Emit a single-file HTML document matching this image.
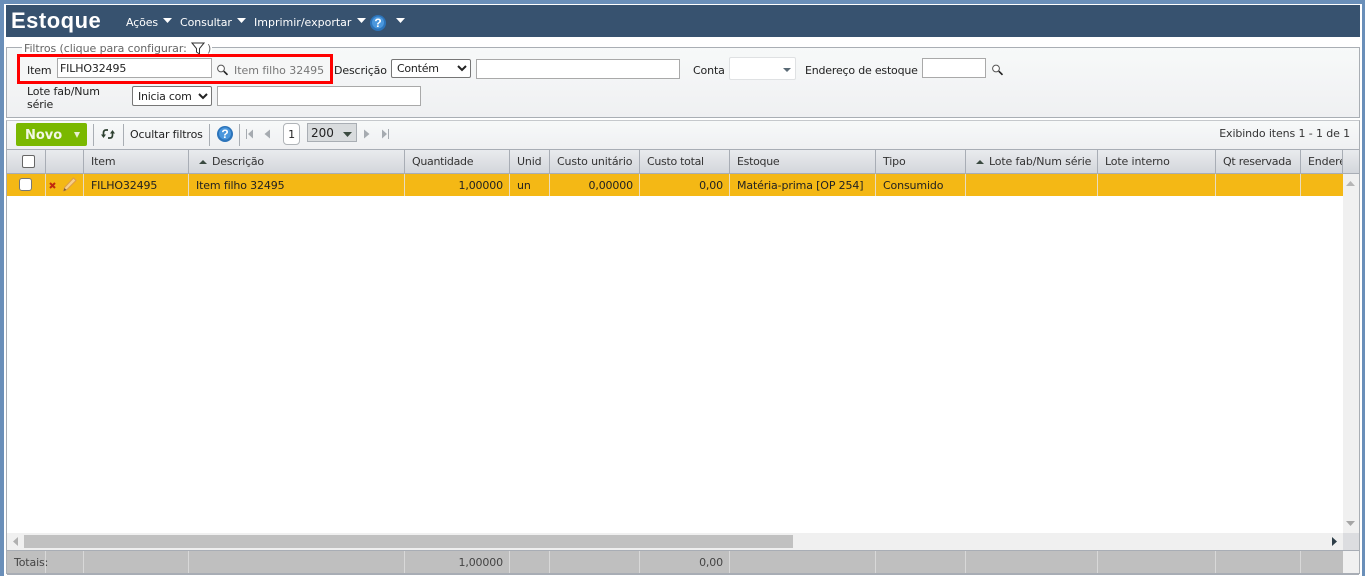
<!DOCTYPE html>
<html lang="pt-BR">
<head>
<meta charset="utf-8">
<title>Estoque</title>
<style>
html,body{margin:0;padding:0;width:1365px;height:576px;overflow:hidden;background:#fff;font-family:"DejaVu Sans","Liberation Sans",sans-serif;font-size:11px;color:#222;letter-spacing:-.14px}
div,span,input,select{box-sizing:border-box;position:absolute}
.t{white-space:nowrap;line-height:14px}
.gr{background:linear-gradient(#f7f9f9,#eff0f2)}
.hc{top:150px;height:24px;line-height:23px;color:#333;white-space:nowrap;overflow:hidden;padding-left:7px;border-right:1px solid #a8adb5}
.rc{top:174px;height:22px;line-height:23px;color:#222;white-space:nowrap;padding:0 6px 0 7px;border-right:1px solid #e8dcc0}
.tc{top:551px;height:22px;line-height:23px;color:#444;white-space:nowrap;padding:0 6px 0 7px;border-right:1px solid #d8d8d8}
.box{background:#fff;border:1px solid #a9a9a9}
.cb{width:14px;height:14px;background:#fff;border:1px solid #767676;border-radius:2px}
select{font-family:inherit;font-size:11px;letter-spacing:-.25px;color:#222;background:#fff;border:1px solid #767676;border-radius:2px;padding:0 0 0 1px;margin:0}
.sep{width:1px;background:#a9aeb4;top:124px;height:22px}
svg{position:absolute;display:block}
</style>
</head>
<body>
<!-- outer frame -->
<div style="left:0;top:0;width:1365px;height:4px;background:#6a8fb9"></div>
<div style="left:0;top:0;width:4px;height:576px;background:#6a8fb9"></div>
<div style="left:1362px;top:0;width:3px;height:576px;background:#6a8fb9"></div>

<!-- header bar -->
<div style="left:6px;top:5px;width:1354px;height:32px;background:#37526f"></div>
<div class="t" style="left:11px;top:8px;font-family:'Liberation Sans',sans-serif;font-size:22px;line-height:25px;font-weight:bold;color:#fff;letter-spacing:.5px">Estoque</div>
<div class="t" style="left:126px;top:16px;color:#fff">Ações</div>
<svg style="left:163px;top:18px" width="9" height="5"><path d="M0 0H9L4.5 5Z" fill="#fff"/></svg>
<div class="t" style="left:180px;top:16px;color:#fff;letter-spacing:-.1px">Consultar</div>
<svg style="left:237px;top:18px" width="9" height="5"><path d="M0 0H9L4.5 5Z" fill="#fff"/></svg>
<div class="t" style="left:254px;top:16px;color:#fff;letter-spacing:0">Imprimir/exportar</div>
<svg style="left:357px;top:18px" width="9" height="5"><path d="M0 0H9L4.5 5Z" fill="#fff"/></svg>
<svg style="left:370px;top:15px" width="16" height="16"><circle cx="8" cy="8" r="8" fill="#2c74ba"/><circle cx="8" cy="7.5" r="6" fill="#4a97dd"/><text x="8" y="12" font-family="Liberation Sans" font-size="12" font-weight="bold" fill="#fff" text-anchor="middle">?</text></svg>
<svg style="left:396px;top:18px" width="9" height="5"><path d="M0 0H9L4.5 5Z" fill="#fff"/></svg>

<!-- filter panel -->
<div class="gr" style="left:6px;top:47px;width:1354px;height:71px;border:1px solid #a9aeb4"></div>
<div style="left:22px;top:42px;width:190px;height:12px;background:#fff"></div>
<div class="t" style="left:24px;top:42px;color:#666;letter-spacing:-.08px">Filtros (clique para configurar:</div>
<svg style="left:191px;top:42px" width="14" height="13"><path d="M1 1H13L8.5 6.5V12L5.5 10V6.5Z" fill="#fff" stroke="#333" stroke-width="1"/></svg>
<div class="t" style="left:207px;top:42px;color:#666">)</div>

<div style="left:17px;top:54px;width:316px;height:30px;border:3px solid #f00;background:#f6f7f7"></div>
<div class="t" style="left:27px;top:64px">Item</div>
<div class="box" style="left:57px;top:58px;width:155px;height:20px;padding-left:2px;line-height:19px;color:#222">FILHO32495</div>
<svg style="left:216px;top:64px" width="13" height="12"><circle cx="5" cy="4.5" r="3.4" fill="#fff" stroke="#555" stroke-width="1"/><path d="M7.8 7.2L11.5 10.8" stroke="#222" stroke-width="1.7"/></svg>
<div class="t" style="left:234px;top:64px;color:#777;letter-spacing:-.04px">Item filho 32495</div>
<div class="t" style="left:334px;top:64px">Descrição</div>
<select style="left:391px;top:59px;width:80px;height:19px"><option>Contém</option></select>
<div class="box" style="left:476px;top:59px;width:204px;height:20px"></div>
<div class="t" style="left:693px;top:64px">Conta</div>
<div style="left:729px;top:57px;width:67px;height:23px;background:#fff;border:1px solid #dfe1e3;border-radius:2px"></div>
<svg style="left:783px;top:68px" width="8" height="4"><path d="M0 0H8L4 4Z" fill="#5a6a75"/></svg>
<div class="t" style="left:805px;top:64px;letter-spacing:-.2px">Endereço de estoque</div>
<div class="box" style="left:922px;top:58px;width:64px;height:20px"></div>
<svg style="left:991px;top:64px" width="13" height="12"><circle cx="5" cy="4.5" r="3.4" fill="#fff" stroke="#555" stroke-width="1"/><path d="M7.8 7.2L11.5 10.8" stroke="#222" stroke-width="1.7"/></svg>
<div class="t" style="left:27px;top:85px;line-height:13px">Lote fab/Num<br>série</div>
<select style="left:132px;top:86px;width:80px;height:20px"><option>Inicia com</option></select>
<div class="box" style="left:217px;top:86px;width:204px;height:20px"></div>

<!-- grid frame -->
<div style="left:6px;top:120px;width:1354px;height:454px;border:1px solid #a9aeb4;border-top-color:#c5c8cc;background:#fff"></div>

<!-- toolbar -->
<div class="gr" style="left:7px;top:121px;width:1352px;height:28px"></div>
<div style="left:16px;top:123px;width:71px;height:23px;background:#7ab800;border-radius:2px"></div>
<div class="t" style="left:25px;top:129px;font-size:13px;letter-spacing:0;font-weight:bold;color:#f2f7e4">Novo</div>
<svg style="left:74px;top:132px" width="6" height="6"><path d="M0 0H6L3 6Z" fill="#e8f0d0"/></svg>
<div class="sep" style="left:93px"></div>
<svg style="left:101px;top:128px" width="14" height="12"><path d="M7 2H5C3.300 2 2.500 3 2.500 5V8" fill="none" stroke="#2d4030" stroke-width="1.700"/><path d="M0 6.500H5L2.500 10Z" fill="#2d4030"/><path d="M7 10H9C10.700 10 11.500 9 11.500 7V4" fill="none" stroke="#2d4030" stroke-width="1.700"/><path d="M9 5.500H14L11.500 2Z" fill="#2d4030"/></svg>
<div class="sep" style="left:123px"></div>
<div class="t" style="left:130px;top:128px">Ocultar filtros</div>
<div class="sep" style="left:209px"></div>
<svg style="left:217px;top:126px" width="16" height="16"><circle cx="8" cy="8" r="8" fill="#2c74ba"/><circle cx="8" cy="7.5" r="6" fill="#4a97dd"/><text x="8" y="12" font-family="Liberation Sans" font-size="12" font-weight="bold" fill="#fff" text-anchor="middle">?</text></svg>
<div class="sep" style="left:239px"></div>
<svg style="left:246px;top:129px" width="8" height="10"><path d="M0.5 0V10" stroke="#a6abb0"/><path d="M7 0.5V9.5L2 5Z" fill="#a6abb0"/></svg>
<svg style="left:264px;top:129px" width="6" height="10"><path d="M6 0.5V9.5L0.5 5Z" fill="#a6abb0"/></svg>
<div style="left:283px;top:123px;width:17px;height:22px;background:#fff;border:1px solid #b0b4b8;border-radius:4px;text-align:center;line-height:21px;color:#222">1</div>
<div style="left:307px;top:123px;width:50px;height:19px;background:#d9dcde;border:1px solid #a9aeb4;padding-left:3px;line-height:18px;font-size:12px;letter-spacing:0;color:#222">200</div>
<svg style="left:343px;top:132px" width="9" height="5"><path d="M0 0H9L4.5 5Z" fill="#3a4a40"/></svg>
<svg style="left:364px;top:129px" width="6" height="10"><path d="M0 0.5V9.5L5.5 5Z" fill="#a6abb0"/></svg>
<svg style="left:381px;top:129px" width="8" height="10"><path d="M7.5 0V10" stroke="#a6abb0"/><path d="M1 0.5V9.5L6 5Z" fill="#a6abb0"/></svg>
<div class="t" style="left:1150px;width:200px;text-align:right;top:127px;color:#333;letter-spacing:-.12px">Exibindo itens 1 - 1 de 1</div>

<!-- grid header -->
<div style="left:7px;top:149px;width:1352px;height:25px;background:linear-gradient(#e9ebee,#d3d6db);border-top:1px solid #a8adb5;border-bottom:1px solid #a8adb5"></div>
<div class="hc" style="left:7px;width:39px"></div>
<div class="cb" style="left:22px;top:155px;border-color:#666;width:13px;height:13px"></div>
<div class="hc" style="left:46px;width:38px"></div>
<div class="hc" style="left:84px;width:105px">Item</div>
<div class="hc" style="left:189px;width:216px;padding-left:23px;letter-spacing:-.25px">Descrição</div>
<svg style="left:199px;top:160px" width="8" height="4"><path d="M0 4H8L4 0Z" fill="#3a4a40"/></svg>
<div class="hc" style="left:405px;width:105px;letter-spacing:-.3px">Quantidade</div>
<div class="hc" style="left:510px;width:40px">Unid</div>
<div class="hc" style="left:550px;width:90px">Custo unitário</div>
<div class="hc" style="left:640px;width:90px;letter-spacing:-.3px">Custo total</div>
<div class="hc" style="left:730px;width:146px;letter-spacing:-.3px">Estoque</div>
<div class="hc" style="left:876px;width:90px">Tipo</div>
<div class="hc" style="left:966px;width:132px;padding-left:23px">Lote fab/Num série</div>
<svg style="left:976px;top:160px" width="8" height="4"><path d="M0 4H8L4 0Z" fill="#3a4a40"/></svg>
<div class="hc" style="left:1098px;width:118px">Lote interno</div>
<div class="hc" style="left:1216px;width:85px;letter-spacing:-.25px">Qt reservada</div>
<div class="hc" style="left:1301px;width:42px">Endereço</div>

<!-- row -->
<div style="left:7px;top:174px;width:1336px;height:22px;background:#f4b815"></div>
<div class="rc" style="left:7px;width:39px"></div>
<div class="cb" style="left:19px;top:178px;width:13px;height:13px;border-color:#777;border-radius:3px"></div>
<div class="rc" style="left:46px;width:38px"></div>
<svg style="left:49px;top:182px" width="7" height="7"><path d="M1 1L6 6M6 1L1 6" stroke="#c02a10" stroke-width="2"/></svg>
<svg style="left:62px;top:177px" width="15" height="15"><path d="M1.500 14L2.500 10.500L11.500 1L14 3.500L5 12.500Z" fill="#f7cf8a" stroke="#dc9c4a" stroke-width="1"/><path d="M1.500 14L2.500 11L4.500 13Z" fill="#7a5a30"/></svg>
<div class="rc" style="left:84px;width:105px">FILHO32495</div>
<div class="rc" style="left:189px;width:216px">Item filho 32495</div>
<div class="rc" style="left:405px;width:105px;text-align:right">1,00000</div>
<div class="rc" style="left:510px;width:40px">un</div>
<div class="rc" style="left:550px;width:90px;text-align:right">0,00000</div>
<div class="rc" style="left:640px;width:90px;text-align:right">0,00</div>
<div class="rc" style="left:730px;width:146px;padding-right:0">Matéria-prima [OP 254]</div>
<div class="rc" style="left:876px;width:90px">Consumido</div>
<div class="rc" style="left:966px;width:132px"></div>
<div class="rc" style="left:1098px;width:118px"></div>
<div class="rc" style="left:1216px;width:85px"></div>
<div class="rc" style="left:1301px;width:42px;border-right:0"></div>

<!-- vertical scrollbar -->
<div style="left:1343px;top:174px;width:16px;height:359px;background:#f0f0f0"></div>
<svg style="left:1346px;top:181px" width="9" height="5"><path d="M0 5H9L4.500 0Z" fill="#b5b5b5"/></svg>
<svg style="left:1346px;top:521px" width="9" height="5"><path d="M0 0H9L4.500 5Z" fill="#a5a5a5"/></svg>

<!-- horizontal scrollbar -->
<div style="left:7px;top:533px;width:1336px;height:17px;background:#f0f0f0"></div>
<div style="left:24px;top:535px;width:769px;height:13px;background:#c1c1c1"></div>
<svg style="left:13px;top:537px" width="5" height="9"><path d="M5 0V9L0 4.500Z" fill="#b0b0b0"/></svg>
<svg style="left:1332px;top:537px" width="5" height="9"><path d="M0 0V9L5 4.500Z" fill="#2e3e48"/></svg>
<div style="left:1343px;top:533px;width:16px;height:17px;background:#dcdde0"></div>

<!-- totals -->
<div style="left:7px;top:550px;width:1352px;height:1px;background:#a8adb5"></div>
<div style="left:7px;top:551px;width:1336px;height:22px;background:#bfbfbf"></div>
<div style="left:1343px;top:551px;width:16px;height:22px;background:#f0f0f0"></div>
<div style="left:7px;top:573px;width:1352px;height:2px;background:#a8adb5"></div>
<div class="tc" style="left:7px;width:39px;overflow:visible">Totais:</div>
<div class="tc" style="left:46px;width:38px"></div>
<div class="tc" style="left:84px;width:105px"></div>
<div class="tc" style="left:189px;width:216px"></div>
<div class="tc" style="left:405px;width:105px;text-align:right">1,00000</div>
<div class="tc" style="left:510px;width:40px"></div>
<div class="tc" style="left:550px;width:90px"></div>
<div class="tc" style="left:640px;width:90px;text-align:right">0,00</div>
<div class="tc" style="left:730px;width:146px"></div>
<div class="tc" style="left:876px;width:90px"></div>
<div class="tc" style="left:966px;width:132px"></div>
<div class="tc" style="left:1098px;width:118px"></div>
<div class="tc" style="left:1216px;width:85px"></div>
<div class="tc" style="left:1301px;width:42px;border-right:0"></div>
</body>
</html>
